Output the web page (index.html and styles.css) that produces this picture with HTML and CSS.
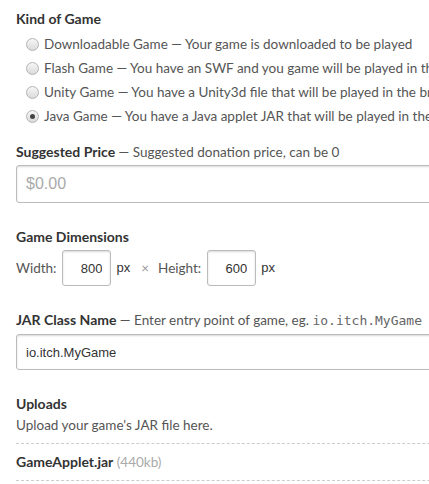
FILE: index.html
```html
<!DOCTYPE html>
<html>
  <head>
    <meta charset="utf-8" />
    <title>Edit game</title>
    <link rel="stylesheet" href="styles.css">
  </head>
  <body>
    <form class="game-form">
      <div class="field kinds">
        <div class="label">Kind of Game</div>
        <label class="radio-row">
          <input type="radio" name="kind" />
          <span>Downloadable Game <span class="sub">— Your game is downloaded to be played</span></span>
        </label>
        <label class="radio-row">
          <input type="radio" name="kind" />
          <span>Flash Game <span class="sub">— You have an SWF and you game will be played in the browser</span></span>
        </label>
        <label class="radio-row">
          <input type="radio" name="kind" />
          <span>Unity Game <span class="sub">— You have a Unity3d file that will be played in the browser</span></span>
        </label>
        <label class="radio-row">
          <input type="radio" name="kind" checked />
          <span>Java Game <span class="sub">— You have a Java applet JAR that will be played in the browser</span></span>
        </label>
      </div>

      <div class="field">
        <div class="label">Suggested Price <span class="sub">— Suggested donation price, can be 0</span></div>
        <input class="text-input price" type="text" placeholder="$0.00" />
      </div>

      <div class="field">
        <div class="label">Game Dimensions</div>
        <div class="dimensions">
          <span>Width:</span>
          <input class="text-input small" type="text" value="800" />
          <span class="unit">px</span>
          <span class="times">×</span>
          <span>Height:</span>
          <input class="text-input small" type="text" value="600" />
          <span class="unit">px</span>
        </div>
      </div>

      <div class="field">
        <div class="label">JAR Class Name <span class="sub">— Enter entry point of game, eg. <code>io.itch.MyGame</code></span></div>
        <input class="text-input" type="text" value="io.itch.MyGame" />
      </div>

      <div class="field">
        <div class="label">Uploads</div>
        <p class="hint">Upload your game's JAR file here.</p>
        <ul class="uploads">
          <li><strong>GameApplet.jar</strong> <span class="size">(440kb)</span></li>
        </ul>
      </div>
    </form>
  </body>
</html>
```

FILE: styles.css
```css
html,
body {
  margin: 0;
  overflow: hidden;
  background: #fff;
}

body {
  font-family: Lato, "Open Sans", sans-serif;
  font-size: 13.5px;
  line-height: 20px;
  color: #555;
}

.game-form {
  width: 640px;
  padding: 9px 0 0 16px;
}

.field {
  margin-bottom: 24px;
}

.field.kinds {
  margin-bottom: 14px;
}

.label {
  font-size: 14px;
  font-weight: bold;
  color: #333;
  margin-bottom: 3px;
}

.sub {
  font-size: 13.5px;
  font-weight: normal;
  color: #555;
}

.radio-row {
  display: flex;
  align-items: center;
  height: 24px;
  padding-left: 10px;
}

.radio-row:first-of-type {
  margin-top: 1px;
}

.radio-row input {
  appearance: none;
  -webkit-appearance: none;
  width: 13px;
  height: 13px;
  margin: 0 5px 0 0;
  border: 1px solid #b4b4b4;
  border-radius: 50%;
  background: linear-gradient(#f6f6f6, #dadada);
  box-sizing: border-box;
  position: relative;
}

.radio-row input:checked::after {
  content: "";
  position: absolute;
  left: 3px;
  top: 3px;
  width: 5px;
  height: 5px;
  border-radius: 50%;
  background: #444;
}

.radio-row > span {
  white-space: nowrap;
}

.text-input {
  display: block;
  width: 100%;
  box-sizing: border-box;
  height: 36px;
  padding: 0 9px;
  border: 1px solid #bbb;
  border-radius: 3px;
  box-shadow: inset 0 1px 2px rgba(0, 0, 0, 0.15);
  font-family: "Liberation Sans", Arial, sans-serif;
  font-size: 13px;
  color: #333;
}

.text-input.price {
  height: 38px;
  font-size: 16px;
}

.text-input::placeholder {
  color: #aaa;
}

.dimensions {
  display: flex;
  align-items: center;
}

.text-input.small {
  width: 49px;
  margin: 0 5px 0 6px;
  padding: 0 8px;
  text-align: right;
}

.unit {
  font-family: "Liberation Sans", Arial, sans-serif;
  font-size: 13px;
  color: #333;
}

.times {
  color: #999;
  margin: 0 9px 0 11px;
}

code {
  font-family: "DejaVu Sans Mono", monospace;
  font-size: 13px;
  color: #666;
}

.hint {
  margin: -2px 0 8px;
}

.uploads {
  list-style: none;
  margin: 0;
  padding: 0;
  border-top: 1px dashed #ccc;
}

.uploads li {
  padding: 8px 0;
  border-bottom: 1px dashed #ccc;
}

.uploads strong {
  font-size: 14px;
  color: #333;
}

.size {
  color: #aaa;
}
```
